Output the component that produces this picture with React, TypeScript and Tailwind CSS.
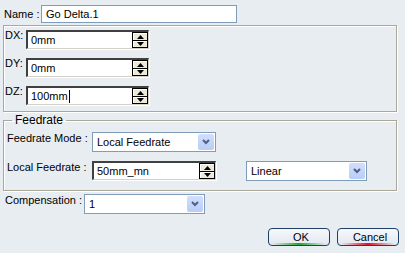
import React from "react";

const font = { fontFamily: '"Liberation Sans", Arial, sans-serif' };

function Spin() {
  return (
    <div className="flex flex-col w-[16px] h-[16px] bg-black gap-[1px] border border-black">
      <div className="flex-1 bg-[#ece9d8] border-t border-l border-white flex items-center justify-center">
        <svg width="7" height="4" viewBox="0 0 7 4"><path d="M3.5 0 L7 4 L0 4Z" fill="black" /></svg>
      </div>
      <div className="flex-1 bg-[#ece9d8] border-t border-l border-white flex items-center justify-center">
        <svg width="7" height="4" viewBox="0 0 7 4"><path d="M0 0 L7 0 L3.5 4Z" fill="black" /></svg>
      </div>
    </div>
  );
}

function SpinInput({ value, w, caret }: { value: string; w: string; caret?: boolean }) {
  return (
    <div className={`${w} h-[19px] shrink-0 flex items-center bg-white border-t-2 border-l-2 border-t-[#404040] border-l-[#404040] border-b border-r border-b-[#d4d0c8] border-r-[#d4d0c8] shadow-[1px_1px_0_#ffffff]`}>
      <div className="flex-1 pl-[3px] text-[11px] leading-none flex items-center">
        {value}
        {caret && <span className="inline-block w-[1px] h-[13px] bg-black ml-[1px]" />}
      </div>
      <Spin />
    </div>
  );
}

function Combo({ value, w }: { value: string; w: string }) {
  return (
    <div className={`${w} h-[20px] shrink-0 flex items-center bg-white border border-[#7f9db9] p-[1px]`}>
      <div className="flex-1 pl-[3px] text-[11px] leading-none">{value}</div>
      <div className="w-[16px] h-full rounded-[2px] bg-gradient-to-b from-[#d2defc] to-[#b8cdf8] flex items-center justify-center">
        <svg width="8" height="6" viewBox="0 0 8 6">
          <path d="M1 1 L4 4 L7 1" stroke="#4d6185" strokeWidth="2" fill="none" />
        </svg>
      </div>
    </div>
  );
}

function Btn({ label, stripe }: { label: string; stripe: string }) {
  return (
    <div className="relative w-[62px] h-[18px] rounded-[4px] border border-[#1f3f66] bg-gradient-to-b from-[#f6f8fb] to-[#e2e8ee] flex items-center justify-center text-[11px] overflow-hidden">
      <span className="pl-[4px]">{label}</span>
      <div className={`absolute bottom-0 left-[3px] right-[3px] h-[2px] ${stripe}`} />
    </div>
  );
}

export default function App() {
  return (
    <div className="w-[405px] h-[253px] bg-[#e8edf2] text-black flex flex-col pt-[5px] overflow-hidden" style={font}>
      <div className="flex items-center h-[18px] pl-[4px]">
        <div className="w-[37px] shrink-0 whitespace-nowrap text-[11px]">Name :</div>
        <div className="w-[196px] h-[18px] bg-white border border-[#7f9db9] flex items-center pl-[4px] text-[11px]">Go Delta.1</div>
      </div>

      <div className="mt-[2px] ml-[3px] w-[394px] h-[87px] border border-[#aca899] shadow-[inset_1px_1px_0_#ffffff,1px_1px_0_#ffffff] pt-[4px] flex flex-col gap-[9px]">
        {[
          ["DX:", "0mm", false],
          ["DY:", "0mm", false],
          ["DZ:", "100mm", true],
        ].map(([l, v, c]) => (
          <div key={l as string} className="flex items-start pl-[1px]">
            <div className="w-[21px] shrink-0 whitespace-nowrap text-[11px] leading-[10px]">{l as string}</div>
            <SpinInput value={v as string} w="w-[123px]" caret={c as boolean} />
          </div>
        ))}
      </div>

      <fieldset className="mt-[2px] ml-[3px] w-[394px] h-[77px] border border-[#aca899] shadow-[inset_1px_1px_0_#ffffff,1px_1px_0_#ffffff] px-0 pt-[5px]">
        <legend className="ml-[8px] px-[3px] text-[12px] leading-[13px]">Feedrate</legend>
        <div className="flex flex-col gap-[9px]">
          <div className="flex items-start pl-[3px]">
            <div className="w-[85px] shrink-0 whitespace-nowrap text-[11px] leading-none pt-[1px]">Feedrate Mode :</div>
            <Combo value="Local Feedrate" w="w-[124px]" />
          </div>
          <div className="flex items-start pl-[3px]">
            <div className="w-[85px] shrink-0 whitespace-nowrap text-[11px] leading-none pt-[1px]">Local Feedrate :</div>
            <SpinInput value="50mm_mn" w="w-[124px]" />
            <div className="ml-[30px]">
              <Combo value="Linear" w="w-[121px]" />
            </div>
          </div>
        </div>
      </fieldset>

      <div className="mt-[3px] flex items-start pl-[5px]">
        <div className="w-[79px] shrink-0 whitespace-nowrap text-[11px] leading-none pt-[1px]">Compensation :</div>
        <Combo value="1" w="w-[121px]" />
      </div>

      <div className="mt-[14px] flex justify-end gap-[7px] pr-[6px]">
        <Btn label="OK" stripe="bg-gradient-to-r from-transparent via-[#21a336] to-transparent" />
        <Btn label="Cancel" stripe="bg-gradient-to-r from-transparent via-[#e0102a] to-transparent" />
      </div>
    </div>
  );
}
